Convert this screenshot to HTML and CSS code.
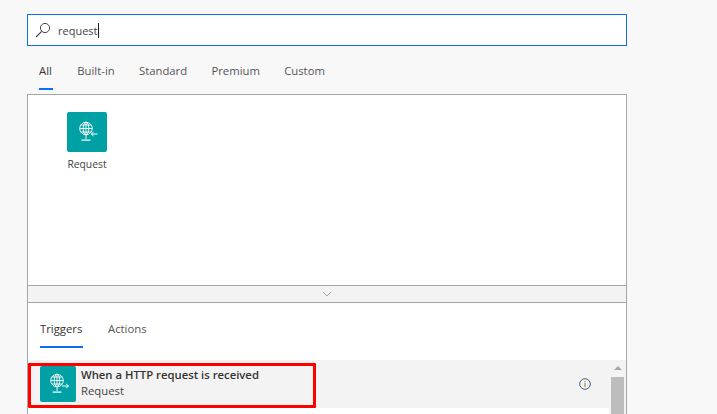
FILE: index.html
```html
<!DOCTYPE html>
<html lang="en">
<head>
<meta charset="utf-8">
<title>Request</title>
<link rel="stylesheet" href="styles.css">
</head>
<body>
<svg class="defs" width="0" height="0" aria-hidden="true">
  <symbol id="globe" viewBox="0 0 24 24">
    <g fill="none" stroke="#fff" stroke-width="0.900">
      <circle cx="11" cy="8.500" r="6.300"/>
      <ellipse cx="11" cy="8.500" rx="2.800" ry="6.300"/>
      <path d="M4.700 8.500h12.600M5.800 5h10.400M5.800 12h10.400M11 2.200v12.600M11 15v4"/>
    </g>
    <path d="M6.500 19.500h9v1.200h-9z" fill="#fff"/>
  </symbol>
</svg>
<main class="designer">
  <div class="search">
    <svg class="search-icon" viewBox="0 0 16 16"><circle cx="10" cy="6" r="4.600" fill="none" stroke="#444" stroke-width="1"/><path d="M6.700 9.300 1 15" fill="none" stroke="#444" stroke-width="1.100"/></svg>
    <span class="query">request</span><span class="caret"></span>
  </div>
  <nav class="tabs">
    <span class="tab active">All</span>
    <span class="tab">Built-in</span>
    <span class="tab">Standard</span>
    <span class="tab">Premium</span>
    <span class="tab">Custom</span>
  </nav>
  <section class="panel">
    <div class="connectors">
      <div class="connector">
        <span class="tile">
          <svg class="glyph" viewBox="0 0 24 24"><use href="#globe"/><path d="M22.500 14h-6M18.500 12l-2.300 2 2.300 2" fill="none" stroke="#fff" stroke-width="1"/></svg>
        </span>
        <span class="connector-name">Request</span>
      </div>
    </div>
    <div class="collapse">
      <svg class="chevron" viewBox="0 0 10 6"><path d="M1 1l4 4 4-4" fill="none" stroke="#a6a6a6" stroke-width="1"/></svg>
    </div>
    <div class="lower">
      <nav class="subtabs">
        <span class="subtab active">Triggers</span>
        <span class="subtab">Actions</span>
      </nav>
      <div class="results">
        <div class="row">
          <span class="tile small">
            <svg class="glyph" viewBox="0 0 24 24"><use href="#globe"/><path d="M16 14h6.500M20.200 12l2.300 2-2.300 2" fill="none" stroke="#fff" stroke-width="1"/></svg>
          </span>
          <div class="row-text">
            <span class="row-title">When a HTTP request is received</span>
            <span class="row-sub">Request</span>
          </div>
          <svg class="info" viewBox="0 0 12 12"><circle cx="6" cy="6" r="5.300" fill="none" stroke="#3f5f8f" stroke-width="1"/><path d="M6 5v4M6 3v1.200" stroke="#b9812f" stroke-width="1.200"/></svg>
        </div>
        <div class="scrollbar">
          <span class="arrow"></span>
          <span class="thumb"></span>
        </div>
        <div class="highlight"></div>
      </div>
    </div>
  </section>
</main>
</body>
</html>
```
FILE: styles.css
```css
* { box-sizing: border-box; }
html, body { margin: 0; height: 100%; }
body {
  background: #f8f8f8;
  font-family: "Open Sans", "Noto Sans", "Liberation Sans", sans-serif;
  color: #333;
  overflow: hidden;
}
.defs { position: absolute; }
.designer {
  width: 600px;
  height: 414px;
  margin-left: 27px;
  padding-top: 14px;
  display: flex;
  flex-direction: column;
}
.search {
  height: 32px;
  flex: none;
  background: #fff;
  border: 1px solid #0f6cf5;
  display: flex;
  align-items: center;
  padding-left: 7px;
  font-size: 11px;
}
.search-icon { width: 16px; height: 16px; margin-right: 7px; }
.query { color: #444; }
.caret { width: 1px; height: 15px; background: #222; }
.tabs {
  display: flex;
  gap: 24.300px;
  height: 48px;
  flex: none;
  padding: 16px 0 0 12px;
  font-size: 11.300px;
}
.tab { height: 28px; padding-top: 1px; color: #555; }
.tab.active { min-width: 14px; color: #333; border-bottom: 2px solid #0f6cf5; }
.panel {
  flex: 1;
  min-height: 0;
  border: 1px solid #a6a6a6;
  border-bottom: 0;
  background: #fff;
  display: flex;
  flex-direction: column;
}
.connectors { height: 190px; flex: none; padding: 17px 0 0 32px; }
.connector {
  width: 54px;
  display: flex;
  flex-direction: column;
  align-items: center;
  gap: 5px;
}
.tile {
  width: 40px;
  height: 40px;
  flex: none;
  background: #00a1a5;
  border-radius: 2px;
  display: flex;
  align-items: center;
  justify-content: center;
}
.tile.small { width: 36px; height: 36px; }
.glyph { width: 24px; height: 24px; }
.connector-name { font-size: 10.300px; color: #444; }
.collapse {
  height: 18px;
  flex: none;
  background: #f3f3f3;
  border-top: 1px solid #a6a6a6;
  border-bottom: 1px solid #a6a6a6;
  display: flex;
  align-items: center;
  justify-content: center;
}
.chevron { width: 10px; height: 6px; }
.lower { flex: 1; min-height: 0; display: flex; flex-direction: column; }
.subtabs {
  display: flex;
  gap: 25px;
  height: 57px;
  flex: none;
  padding: 18px 0 0 12px;
  font-size: 11.300px;
}
.subtab { height: 27px; color: #555; }
.subtab.active { min-width: 43px; color: #333; border-bottom: 2px solid #0f6cf5; }
.results { position: relative; flex: 1; display: flex; align-items: flex-start; }
.row {
  flex: 1;
  height: 48px;
  background: #f3f3f3;
  display: flex;
  align-items: center;
  padding: 0 18px 0 12px;
}
.row-text {
  flex: 1;
  display: flex;
  flex-direction: column;
  margin-left: 5px;
  margin-top: -2px;
  font-size: 11.300px;
  line-height: 16px;
}
.row-title { font-weight: 600; color: #333; }
.row-sub { color: #444; }
.info { width: 12px; height: 12px; margin-bottom: 1px; }
.scrollbar {
  width: 17px;
  height: 100%;
  flex: none;
  background: #f3f3f3;
  display: flex;
  flex-direction: column;
  align-items: center;
}
.arrow {
  margin-top: 6px;
  width: 0;
  height: 0;
  border-left: 4px solid transparent;
  border-right: 4px solid transparent;
  border-bottom: 4px solid #a6a6a6;
}
.thumb { width: 13px; height: 40px; margin-top: 7px; background: #bdbdbd; }
.highlight {
  position: absolute;
  left: 0;
  top: 3px;
  width: 288px;
  height: 45px;
  border: 3px solid #f00;
  border-radius: 1px;
}
```
